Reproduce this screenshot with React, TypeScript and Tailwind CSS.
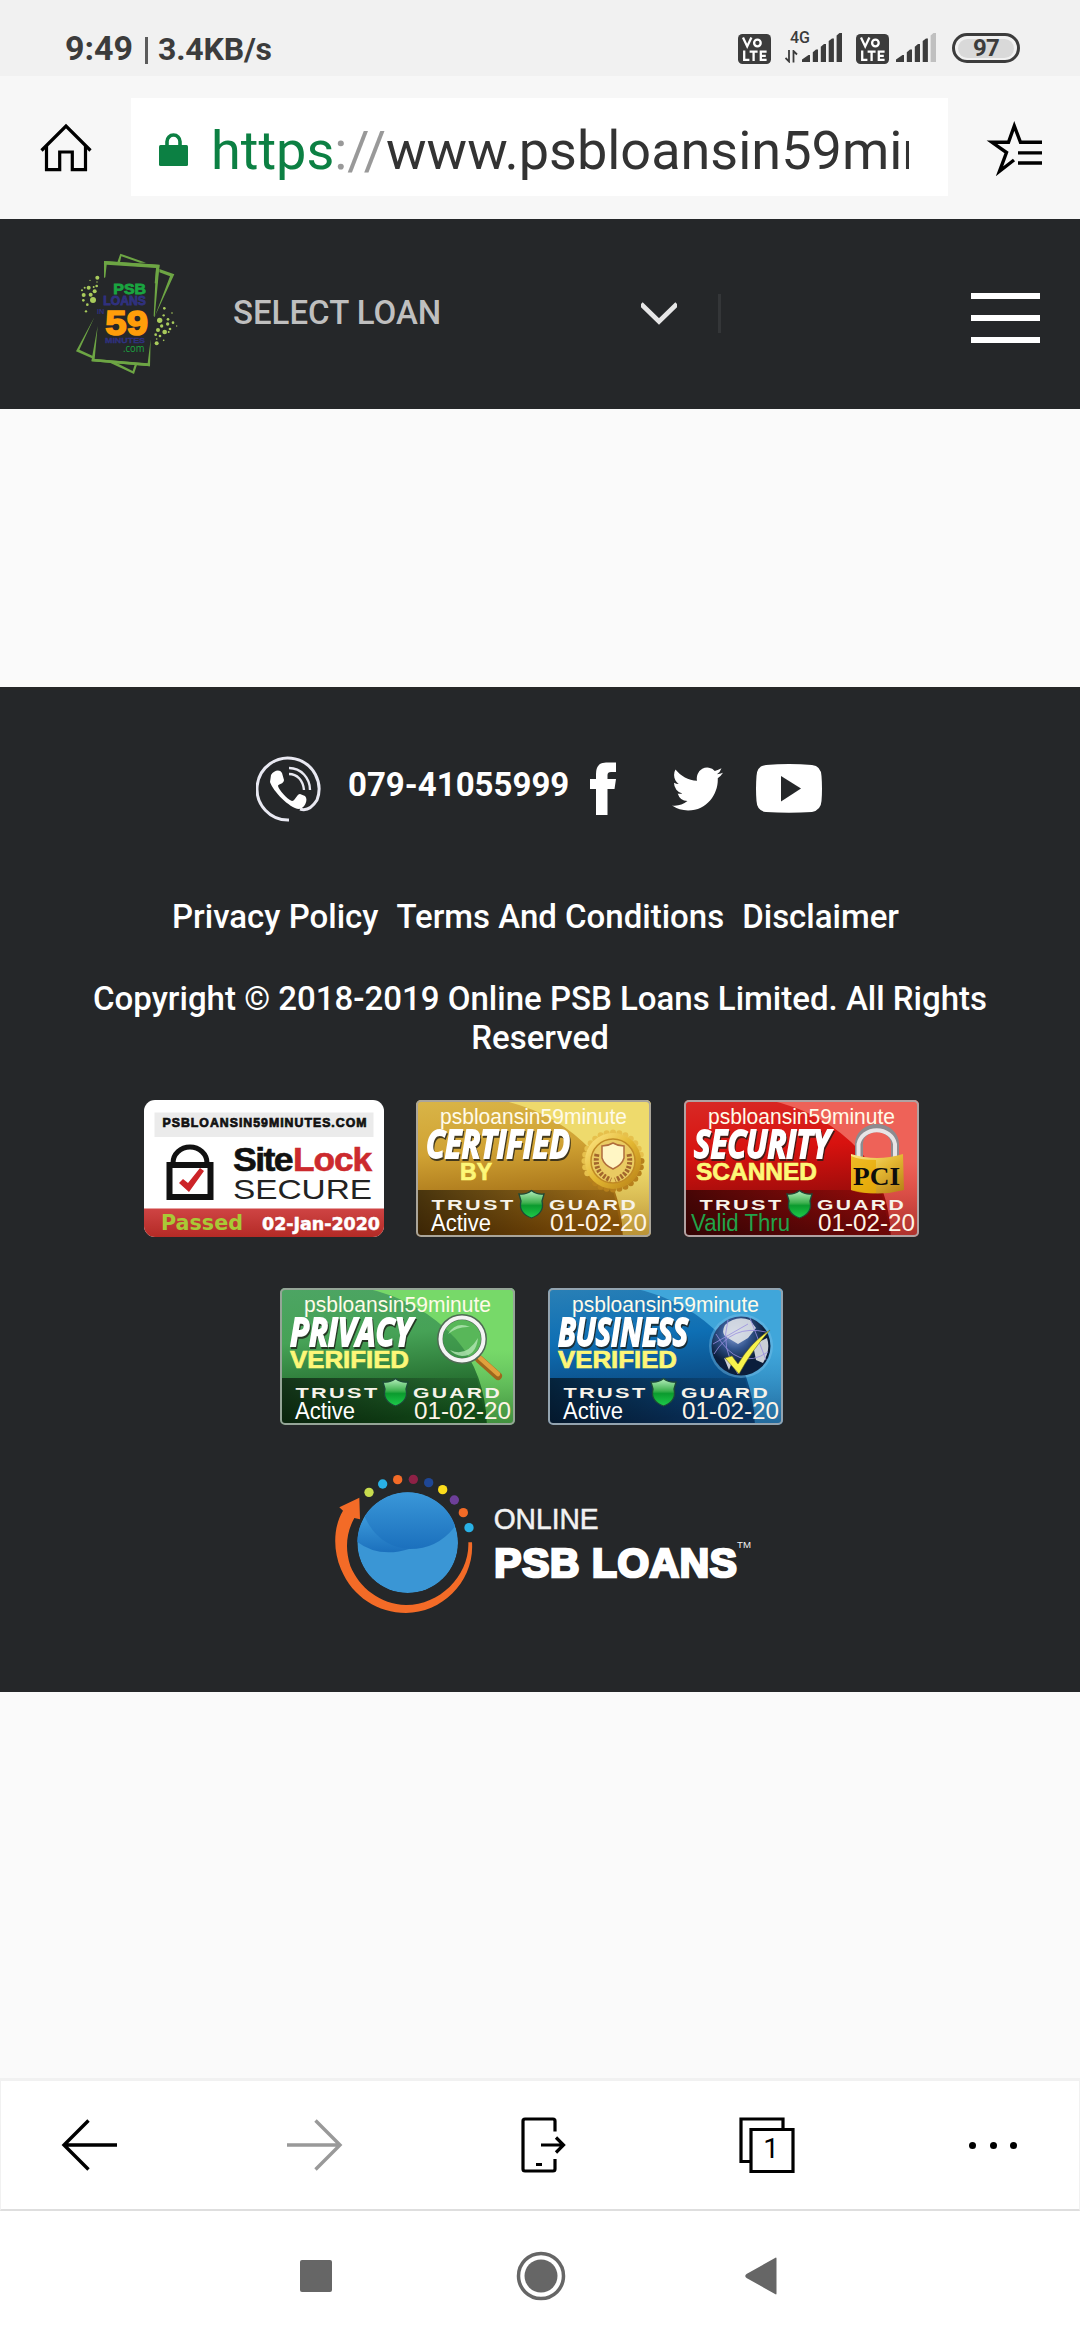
import React from "react";

function VolteIcon() {
  return (
    <svg width="33" height="30" viewBox="0 0 33 30">
      <rect width="33" height="30" rx="4.5" fill="#3c3c3c" />
      <g fill="none" stroke="#fff" strokeWidth="2.3">
        <path d="M5 3.6 9.2 12.4 13.4 3.6" />
        <circle cx="19.4" cy="9" r="3.3" />
        <path d="M6.2 16.5v9.3h5.2M11.6 17.7h8M15.6 17.7v9.2M28.6 17.7h-5.8v8.1h5.8M22.8 21.8h5" />
      </g>
    </svg>
  );
}

function SignalBars({ weak = false }: { weak?: boolean }) {
  return (
    <svg width="40" height="30" viewBox="0 0 40 30" fill="#3c3c3c">
      <path d="M0 29V26.500L6.500 22H8V29ZM10.800 29V19.300L14 16.500H16V29ZM18.800 29V13.800L22 11H24V29ZM26.700 29V8L30 5.500H31.900V29Z" />
      <path d="M34.600 29V2.500L37.500 0H40V29Z" fill={weak ? "#c0c0c0" : "#3c3c3c"} />
    </svg>
  );
}

function StatusBar() {
  return (
    <div className="flex h-[76px] bg-[#f1f1f1] text-[#3c3c3c]">
      <div className="ml-[65px] flex h-[97px] items-center">
        <span className="text-[34px] font-bold">9:49</span>
        <span className="mt-[3px] ml-[12px] h-[27px] w-[3px] bg-[#5c5c5c]" />
        <span className="ml-[10px] text-[32px] font-bold tracking-[-0.2px]">3.4KB/s</span>
      </div>
      <div className="ml-auto flex items-start pr-[60px]">
        <div className="mt-[34px]"><VolteIcon /></div>
        <div className="relative mt-[33px] ml-[14px] flex w-[57px] justify-end">
          <span className="absolute top-[-4px] left-[5px] text-[16px] leading-[18px] font-medium">4G</span>
          <svg className="absolute top-[17px] left-0" width="13" height="13" viewBox="0 0 13 13" fill="none" stroke="#3c3c3c" strokeWidth="1.800">
            <path d="M4 0V11.500L.5 8M8.500 12.500V1L12 4.500" />
          </svg>
          <SignalBars />
        </div>
        <div className="mt-[34px] ml-[14px]"><VolteIcon /></div>
        <div className="mt-[33px] ml-[7px]"><SignalBars weak /></div>
        <div className="mt-[33px] ml-[16px] flex h-[30px] w-[68px] items-center justify-center rounded-full border-[3px] border-[#3c3c3c] bg-[#f1f1f1]">
          <div className="flex h-[19px] w-[56px] items-center justify-center rounded-full bg-[#d9d9d9] text-[24px] leading-none font-bold tracking-[-0.8px]">97</div>
        </div>
      </div>
    </div>
  );
}

function BrowserBar() {
  return (
    <div className="flex h-[143px] bg-[#f7f7f7]">
      <svg className="mt-[47px] ml-[40px]" width="52" height="50" viewBox="0 0 52 50" fill="none" stroke="#000" strokeWidth="3.200">
        <path d="M1.500 27.500 26 3 50.500 27.500" />
        <path d="M6.500 23V46.700H19.700V29H32.300V46.700H45.500V23" />
      </svg>
      <div className="mt-[22px] ml-[39px] flex h-[98px] w-[817px] items-center bg-white">
        <svg className="mt-[3px] ml-[28px]" width="29" height="34" viewBox="0 0 29 34">
          <rect y="13" width="29" height="21" rx="1.500" fill="#0c8043" />
          <path d="M8 14V9.500a6.500 6.500 0 0 1 13 0V14" fill="none" stroke="#0c8043" strokeWidth="3.600" />
        </svg>
        <div className="mt-[7px] ml-[23px] w-[698px] overflow-hidden text-[54px] leading-[70px] whitespace-nowrap text-[#333]">
          <span className="text-[#0c8043]">https</span><span className="text-[#999]">://</span>www.psbloansin59minutes.com
        </div>
      </div>
      <svg className="mt-[43px] ml-[38px]" width="58" height="60" viewBox="0 0 58 60" fill="none" stroke="#000" strokeWidth="3.400">
        <path d="M56 23.300H34.500L28.300 7 22.500 23.300H6L20.500 33.500 13.500 52.300 28 41" />
        <path d="M32 33.900H56M32 44H56" />
      </svg>
    </div>
  );
}

const dots: [number, number, number][] = [
  [112, 113, 6], [90, 121, 2], [74, 143, 3], [86, 143, 6], [101, 141, 3], [110, 138, 4], [111, 126, 2],
  [66, 151, 3], [104, 154, 6], [71, 165, 6], [92, 164, 6], [99, 180, 9], [70, 181, 4], [82, 194, 4], [78, 214, 3.5],
  [313, 205, 4], [336, 219, 2.5], [311, 226, 3.500], [299, 241, 8], [324, 238, 4], [323, 252, 5], [339, 248, 4],
  [305, 258, 5], [350, 258, 2], [294, 270, 6], [314, 276, 7], [330, 267, 4], [287, 284, 4], [300, 288, 4], [326, 276, 3],
  [290, 297, 2.500], [311, 301, 2.500], [290, 310, 6],
];

function PsbLogo() {
  return (
    <svg width="130" height="145" viewBox="0 0 390 435">
      <g fill="#6da544">
        <path d="M132 114V63L299 74 297 92 284 232 281 228 288 84 140 74 136 112Z" />
        <path d="M172 67 181 41 258 68 240 68 184 49 180 67ZM298 87 343 103 284 230 330 109 298 97Z" />
        <path d="M103 232 48 334 96 355 97 347 58 329ZM113 258 94 364 270 379 272 298 263 370 104 357Z" />
        <path d="M140 364 222 402 231 374 224 374 218 393 164 366Z" />
      </g>
      <path d="M132 67 298 79M96 360 270 375M293 78 288 130" fill="none" stroke="#6da544" strokeWidth="8" />
      <g fill="#a9cb5c">{dots.map(([x, y, r], i) => <circle key={i} cx={x} cy={y} r={r} />)}</g>
      <g fontFamily="Liberation Sans" fontWeight="bold" textAnchor="end" strokeWidth="2.500">
        <text x="258" y="162" fontSize="46" textLength="98" lengthAdjust="spacingAndGlyphs" fill="#1aa540" stroke="#1aa540">PSB</text>
        <text x="258" y="194" fontSize="36" textLength="128" lengthAdjust="spacingAndGlyphs" fill="#30317e" stroke="#30317e">LOANS</text>
        <text x="133" y="221" fontSize="20" textLength="22" lengthAdjust="spacingAndGlyphs" fill="#30317e">IN</text>
        <text x="264" y="284" fontSize="107" textLength="128" lengthAdjust="spacingAndGlyphs" fill="#ff9d0a" stroke="#ff9d0a" style={{ strokeWidth: 5 }}>59</text>
        <text x="255" y="309" fontSize="24" textLength="120" lengthAdjust="spacingAndGlyphs" fill="#30317e" stroke="#30317e" style={{ strokeWidth: 1 }}>MINUTES</text>
      </g>
      <text x="253" y="336" textAnchor="end" fontFamily="Open Sans" fontSize="32" textLength="64" lengthAdjust="spacingAndGlyphs" fill="#1aa540">.com</text>
    </svg>
  );
}

function SiteHeader() {
  return (
    <header className="flex h-[190px] items-start bg-[#252729]">
      <div className="mt-[21px] ml-[60px]"><PsbLogo /></div>
      <div className="mt-[75px] ml-[43px] flex w-[488px] items-start">
        <span className="mt-[-1px] text-[33px] leading-[39px] font-medium text-[#bfbfbf]">SELECT LOAN</span>
        <svg className="mt-[6px] ml-auto mr-[41px]" width="36" height="28" viewBox="0 0 36 28" fill="none" stroke="#e6e6e6" strokeWidth="4.800">
          <path d="M0 4 18 21.500 36 4" />
        </svg>
        <span className="h-[39px] w-[3px] bg-[#343638]" />
      </div>
      <div className="mt-[74px] mr-[40px] ml-auto flex w-[69px] flex-col gap-4">
        <span className="h-[6px] bg-white" />
        <span className="h-[6px] bg-white" />
        <span className="h-[6px] bg-white" />
      </div>
    </header>
  );
}

function ContactRow() {
  return (
    <div className="flex h-[66px] items-start pl-[256px] text-white">
      <svg width="66" height="66" viewBox="0 0 66 66" fill="none" stroke="#e9e9f2">
        <path d="M33 64A31 31 0 1 1 61 44C56 52 50 55 44 53" strokeWidth="3" />
        <path d="M15 19C18 14 24 13 26 17L28 24C28 28 22 28 22 30C23 34 31 43 36 45C39 45 41 38 44 38L49 40C53 44 48 53 43 53C33 52 17 35 14 26Z" fill="#fff" stroke="none" />
        <path d="M33 18C41 18 47 24 48 34M33 12C45 12 54 22 54 34" strokeWidth="2.400" />
      </svg>
      <span className="mt-[9px] ml-[26px] w-[221px] text-[33px] leading-[39px] font-bold whitespace-nowrap">079-41055999</span>
      <svg className="mt-[5px] ml-[21px]" width="26" height="54" viewBox="0 0 26 54" fill="#fff">
        <path d="M6 54V28H0V18H6V13Q6 1.500 16 1.500H26V11H21Q17.500 11 17.500 14V18H26L24.500 28H17.500V54Z" />
      </svg>
      <svg className="mt-[11px] ml-[56px]" width="51" height="44" viewBox="0 2 24 20" preserveAspectRatio="none" fill="#fff">
        <path d="M23.950 4.570a10 10 0 0 1-2.820.77 4.960 4.960 0 0 0 2.160-2.720 9.900 9.900 0 0 1-3.130 1.180 4.920 4.920 0 0 0-8.380 4.490C7.690 8.100 4.070 6.130 1.640 3.160a4.820 4.820 0 0 0-.66 2.480c0 1.710.87 3.210 2.180 4.100a4.900 4.900 0 0 1-2.230-.62v.06a4.920 4.920 0 0 0 3.950 4.830 5 5 0 0 1-2.210.08 4.940 4.940 0 0 0 4.600 3.420A9.870 9.870 0 0 1 0 19.540a14 14 0 0 0 7.550 2.210c9.050 0 14-7.500 14-13.980 0-.21 0-.42-.02-.63a9.940 9.940 0 0 0 2.460-2.550z" />
      </svg>
      <svg className="mt-[8px] ml-[33px]" width="66" height="49" viewBox="0 0 66 49">
        <path d="M10 1Q33-1 56 1Q65 2 65.500 12Q66.500 25 65.500 37Q65 46 56 48Q33 49.500 10 48Q1 47 .5 37Q-.5 25 .5 12Q1 2 10 1Z" fill="#fff" />
        <path d="M25 12 45 24.500 25 37.500Z" fill="#252729" />
      </svg>
    </div>
  );
}

function SiteLockBadge() {
  return (
    <svg width="240" height="137" viewBox="0 0 240 137" fontFamily="Liberation Sans">
      <defs>
        <linearGradient id="lockBand" x2="0" y2="1"><stop stopColor="#cf4444" /><stop offset="1" stopColor="#b32a25" /></linearGradient>
        <clipPath id="lockClip"><rect width="240" height="137" rx="11" /></clipPath>
      </defs>
      <g clipPath="url(#lockClip)">
        <rect width="240" height="137" fill="#fff" />
        <rect x="10.500" y="12.500" width="219" height="24.500" fill="#ebebeb" />
        <rect y="108.500" width="240" height="29" fill="url(#lockBand)" />
      </g>
      <text x="18.500" y="27" fontSize="12" fontWeight="bold" letterSpacing="1" textLength="205" lengthAdjust="spacingAndGlyphs" fill="#111" stroke="#111" strokeWidth=".7">PSBLOANSIN59MINUTES.COM</text>
      <rect x="25.500" y="65" width="41" height="32" fill="none" stroke="#111" strokeWidth="6" />
      <path d="M29 63A17 16 0 0 1 63 63" fill="none" stroke="#111" strokeWidth="5" />
      <path d="M35 83 39 79 44 83 56 68 60 71 45 92Z" fill="#cc2428" />
      <text x="89" y="70.500" fontSize="33" fontWeight="bold" letterSpacing="-1.500" textLength="59" lengthAdjust="spacingAndGlyphs" fill="#111" stroke="#111" strokeWidth=".6">Site</text>
      <text x="149" y="70.500" fontSize="33" fontWeight="bold" letterSpacing="-1" textLength="78" lengthAdjust="spacingAndGlyphs" fill="#cc2a2e" stroke="#cc2a2e" strokeWidth=".6">Lock</text>
      <text x="89" y="98.500" fontSize="28" textLength="139" lengthAdjust="spacingAndGlyphs" fill="#222">SECURE</text>
      <text x="17" y="130" fontSize="21" fontFamily="DejaVu Sans" fontWeight="bold" textLength="82" lengthAdjust="spacingAndGlyphs" fill="#a9c936">Passed</text>
      <text x="118" y="130" fontSize="17.500" fontFamily="DejaVu Sans" fontWeight="bold" textLength="118" lengthAdjust="spacingAndGlyphs" fill="#fff" stroke="#fff" strokeWidth=".5">02-Jan-2020</text>
    </svg>
  );
}

type Trust = {
  id: string;
  title: string;
  titleWidth: number;
  sub: string;
  subX: number;
  subWidth: number;
  status: string;
  colors: { light: string; from: string; to: string; border: string; glow: string };
  art: React.ReactNode;
};

const teeth = Array.from({ length: 28 }, (_, i) => {
  const a = (i / 28) * Math.PI * 2;
  return [197 + Math.cos(a) * 28.5, 61 + Math.sin(a) * 28.5];
});

const medal = (
  <g>
    {teeth.map(([x, y], i) => <circle key={i} cx={x} cy={y} r="3" fill={i < 12 ? "#b7801c" : "#e6c04c"} />)}
    <circle cx="197" cy="61" r="28" fill="url(#goldRing)" />
    <circle cx="197" cy="61" r="22" fill="#eacb62" stroke="#c18a25" strokeWidth="1.500" />
    <path d="M181 54Q177 73 195 80M213 54Q217 73 199 80" fill="none" stroke="#a3662c" strokeWidth="5" strokeDasharray="2.500 1.500" />
    <path d="M186 46Q192 46 197 43Q202 46 208 46V58Q206 65 197 69Q188 65 186 58Z" fill="#fff6c4" stroke="#b06c3c" strokeWidth="1.500" />
  </g>
);

const padlock = (
  <g>
    <path d="M175 60V44A18 16 0 0 1 211 44V60" fill="none" stroke="#8d8b8f" strokeWidth="8" />
    <path d="M174.500 60V44A18.500 16.500 0 0 1 211 44V60" fill="none" stroke="#e8e5e6" strokeWidth="4" />
    <path d="M167 54Q193 62 219 54L220 90Q194 97 167 90Z" fill="url(#goldRing)" />
    <path d="M167 56Q175 60 192 60V93Q178 94 167 90Z" fill="#e9a900" opacity=".7" />
    <text x="169" y="85" fontFamily="Liberation Serif" fontWeight="bold" fontSize="26" textLength="47" lengthAdjust="spacingAndGlyphs" fill="#0d0d0d">PCI</text>
  </g>
);

const magnifier = (
  <g>
    <path d="M199 71 218 88" stroke="#a0661c" strokeWidth="8" strokeLinecap="round" />
    <path d="M200 70 218 86" stroke="#e0a13c" strokeWidth="4.500" strokeLinecap="round" />
    <circle cx="182" cy="51" r="22" fill="#3f9a4c" fillOpacity=".55" stroke="#4f6b54" strokeWidth="6" />
    <circle cx="182" cy="51" r="21.500" fill="none" stroke="#f4f4f4" strokeWidth="4" />
    <path d="M168 46Q176 33 190 39Q178 38 168 46ZM170 62Q186 70 198 50Q196 68 182 68Q174 67 170 62Z" fill="#b4e6b4" opacity=".8" />
  </g>
);

const globe = (
  <g>
    <circle cx="193" cy="58" r="32" fill="#7fc4ea" opacity=".4" />
    <circle cx="193" cy="58" r="29.500" fill="url(#globeFill)" />
    <path d="M177 37Q188 27 202 32L208 40 200 50 190 56 180 50Q172 46 177 37ZM205 57 219 50Q223 62 215 75L208 72ZM176 70 184 74 181 82Z" fill="#dfe2e8" opacity=".9" />
    <path d="M166 66Q184 36 218 44M168 46Q190 84 220 64M180 32Q172 60 190 86M202 30 218 72M165 56 200 36" fill="none" stroke="#9a8fe0" strokeWidth="1" opacity=".8" />
    <path d="M177 70 184 68 190 76Q203 54 222 42Q204 62 191 86Z" fill="#f8f34c" stroke="#6e6b22" strokeWidth=".6" />
  </g>
);

const certified: Trust = { id: "cert", title: "CERTIFIED", titleWidth: 144, sub: "BY", subX: 44, subWidth: 32, status: "Active", art: medal, colors: { light: "#eeda6c", from: "#d0a233", to: "#8e5608", border: "#aaa59a", glow: "#d9b548" } };
const security: Trust = { id: "sec", title: "SECURITY", titleWidth: 136, sub: "SCANNED", subX: 12, subWidth: 121, status: "Valid Thru", art: padlock, colors: { light: "#ee6258", from: "#d8120f", to: "#780808", border: "#b0a2a2", glow: "#d82a26" } };
const privacy: Trust = { id: "priv", title: "PRIVACY", titleWidth: 122, sub: "VERIFIED", subX: 10, subWidth: 119, status: "Active", art: magnifier, colors: { light: "#77d969", from: "#46a256", to: "#14531b", border: "#95a597", glow: "#4da564" } };
const business: Trust = { id: "biz", title: "BUSINESS", titleWidth: 130, sub: "VERIFIED", subX: 10, subWidth: 119, status: "Active", art: globe, colors: { light: "#40a6da", from: "#0e6fb4", to: "#0a3768", border: "#93a3af", glow: "#2a80b6" } };

function TrustBadge({ b }: { b: Trust }) {
  const c = b.colors;
  const valid = b.status === "Valid Thru";
  return (
    <svg width="235" height="137" viewBox="0 0 235 137" fontFamily="Liberation Sans">
      <defs>
        <linearGradient id={`${b.id}Base`} x1="0" y1="0" x2=".15" y2="1"><stop stopColor={c.glow} /><stop offset=".4" stopColor={c.from} /><stop offset="1" stopColor={c.to} /></linearGradient>
        <linearGradient id={`${b.id}Light`} x2="0" y2="1"><stop offset=".45" stopColor={c.light} /><stop offset="1" stopColor={c.light} stopOpacity=".45" /></linearGradient>
        <linearGradient id={`${b.id}Band`}><stop stopColor="#000" stopOpacity=".6" /><stop offset=".9" stopColor="#000" stopOpacity=".1" /></linearGradient>
        <linearGradient id={`${b.id}Shield`} x2="0" y2="1"><stop stopColor="#b6efbd" /><stop offset=".45" stopColor="#3eb14f" /><stop offset=".55" stopColor="#0b9b2e" /><stop offset="1" stopColor="#1ecc4b" /></linearGradient>
        <linearGradient id="goldRing" x2="1" y2="1"><stop stopColor="#ffe98a" /><stop offset=".5" stopColor="#e3b732" /><stop offset="1" stopColor="#b47c14" /></linearGradient>
        <radialGradient id="globeFill" cx=".4" cy=".3"><stop stopColor="#8da3d8" /><stop offset=".5" stopColor="#34568f" /><stop offset="1" stopColor="#0b1e3c" /></radialGradient>
        <clipPath id={`${b.id}Clip`}><rect width="235" height="137" rx="5" /></clipPath>
      </defs>
      <g clipPath={`url(#${b.id}Clip)`}>
        <rect width="235" height="137" fill={`url(#${b.id}Base)`} />
        <path d="M85 0Q140 12 176 51Q205 85 207 137H235V0Z" fill={`url(#${b.id}Light)`} />
        <path d="M0 90H197L207 137H0Z" fill={`url(#${b.id}Band)`} />
      </g>
      <rect x="1" y="1" width="233" height="135" rx="4" fill="none" stroke={c.border} strokeWidth="2" />
      {b.art}
      <text x="24" y="23.500" fontSize="21.500" textLength="187" lengthAdjust="spacingAndGlyphs" fill="#fffbe9">psbloansin59minute</text>
      <text className="drop-shadow-[1.5px_2px_0.5px_rgba(30,30,24,0.8)]" x="10" y="58" textLength={b.titleWidth} lengthAdjust="spacingAndGlyphs" fontFamily="Open Sans" fontWeight="bold" fontStyle="italic" fontSize="39" fill="#fff" stroke="#fff" strokeWidth="1.800">{b.title}</text>
      <text x={b.subX} y="80" fontSize="23.500" fontWeight="bold" textLength={b.subWidth} lengthAdjust="spacingAndGlyphs" fill="#fdf778" stroke="#fdf778" strokeWidth=".7">{b.sub}</text>
      <g fontFamily="Liberation Sans" fontWeight="bold" fontSize="14" letterSpacing="1.500" fill="#f7f3ea">
        <text x="15.500" y="110" textLength="84" lengthAdjust="spacingAndGlyphs">TRUST</text>
        <text x="133" y="110" textLength="89" lengthAdjust="spacingAndGlyphs">GUARD</text>
      </g>
      <path d="M103 94Q110 95 115.500 90.500Q121 95 128 94L126 101Q129 113 115.500 118Q102 113 105 101Z" fill={`url(#${b.id}Shield)`} stroke="#1d4a37" strokeWidth="1.300" />
      <text x={valid ? 7 : 15} y="131" fontSize="23" textLength={valid ? 99 : 60} lengthAdjust="spacingAndGlyphs" fill={valid ? "#22a34a" : "#fff"}>{b.status}</text>
      <text x="134" y="131" fontSize="23" textLength="97" lengthAdjust="spacingAndGlyphs" fill="#fff4e6">01-02-20</text>
    </svg>
  );
}

const ring: [number, number, string][] = [
  [147, 97, "#c8dc4e"], [188, 72, "#29b1e6"], [233, 59, "#f36b27"], [280, 58, "#8e2146"], [326, 68, "#1f4795"],
  [368, 89, "#fbdc1c"], [403, 120, "#6d3f9a"], [430, 158, "#f36b27"], [447, 203, "#29b1e6"],
];

function OnlineLogo() {
  return (
    <svg width="450" height="170" viewBox="0 0 1350 510" fontFamily="Liberation Sans">
      <defs>
        <linearGradient id="waveA" x2="0" y2="1"><stop stopColor="#3d9bdb" /><stop offset="1" stopColor="#1b70bd" /></linearGradient>
        <clipPath id="globeClip"><circle cx="263" cy="248" r="151" /></clipPath>
      </defs>
      <g clipPath="url(#globeClip)">
        <circle cx="263" cy="248" r="151" fill="#3a96d5" />
        <path d="M100 236Q170 298 270 266L135 165Z" fill="url(#waveA)" />
        <path d="M133 168Q175 262 270 267Q350 267 402 203L440 80H100Z" fill="url(#waveA)" />
      </g>
      {ring.map(([x, y, c]) => <circle key={x} cx={x} cy={y} r="14" fill={c} />)}
      <path d="M118 113 58 142 69 152C40 200 38 270 63 328C98 412 175 459 258 459C368 459 464 362 456 247H445C449 347 358 436 258 435C180 433 118 383 91 318C74 265 79 218 103 174L120 178Z" fill="#f36b27" />
      <text x="521" y="206" fontSize="86" textLength="315" lengthAdjust="spacingAndGlyphs" fill="#f2f2f2" stroke="#f2f2f2" strokeWidth="1.500">ONLINE</text>
      <text x="523" y="351" fontSize="120" fontWeight="bold" letterSpacing="2" textLength="730" lengthAdjust="spacingAndGlyphs" fill="#fff" stroke="#fff" strokeWidth="8">PSB LOANS</text>
      <text x="1251" y="263" fontSize="29" textLength="42" lengthAdjust="spacingAndGlyphs" fill="#f2f2f2">TM</text>
    </svg>
  );
}

function SiteFooter() {
  return (
    <footer className="h-[1005px] bg-[#252729] pt-[69px] text-[33px] font-medium text-white">
      <ContactRow />
      <nav className="mt-[76px] ml-[172px] flex gap-[18px] leading-[38px] whitespace-nowrap">
        <a>Privacy Policy</a>
        <a>Terms And Conditions</a>
        <a>Disclaimer</a>
      </nav>
      <p className="mt-[43px] px-[80px] text-center leading-[39px]">
        Copyright © 2018-2019 Online PSB Loans Limited. All Rights Reserved
      </p>
      <div className="mt-[43px] ml-[144px] flex">
        <SiteLockBadge />
        <div className="ml-[32px]"><TrustBadge b={certified} /></div>
        <div className="ml-[33px]"><TrustBadge b={security} /></div>
      </div>
      <div className="mt-[51px] ml-[280px] flex gap-[33px]">
        <TrustBadge b={privacy} />
        <TrustBadge b={business} />
      </div>
      <div className="mt-[35px] ml-[320px]"><OnlineLogo /></div>
    </footer>
  );
}

function Toolbar() {
  return (
    <div className="flex h-[133px] items-center border-x border-t-[3px] border-b-2 border-x-[#f1f1f1] border-t-[#f1f1f1] border-b-[#dedede] bg-white pl-[60px]">
      <svg width="58" height="54" viewBox="0 0 58 54" fill="none" stroke="#000" strokeWidth="3.400">
        <path d="M56 27H3M27.500 2.500 3 27 27.500 51.500" />
      </svg>
      <svg className="ml-[167px]" width="58" height="54" viewBox="0 0 58 54" fill="none" stroke="#999" strokeWidth="3.400">
        <path d="M1 27H54M29.500 2.500 54 27 29.500 51.500" />
      </svg>
      <svg className="ml-[177px]" width="46" height="58" viewBox="0 0 46 58" fill="none" stroke="#000" strokeWidth="3.200">
        <path d="M34 15.500V5Q34 3 32 3H4Q2 3 2 5V53Q2 55 4 55H32Q34 55 34 53V43" />
        <path d="M20 29H43M35 21.500 42.500 29 35 36.500M15 48.500H21" />
      </svg>
      <div className="relative ml-[172px] h-[58px] w-[56px]">
        <svg width="56" height="58" viewBox="0 0 56 58" fill="none" stroke="#000" strokeWidth="3.200">
          <path d="M11 45.500H2V3H44V12M12 13.500H54V55.500H12Z" />
        </svg>
        <span className="absolute top-[18px] left-[11px] w-[42px] text-center text-[28px] leading-[30px]">1</span>
      </div>
      <div className="ml-[174px] flex gap-[13.5px]">
        <span className="size-[7px] rounded-full bg-black" />
        <span className="size-[7px] rounded-full bg-black" />
        <span className="size-[7px] rounded-full bg-black" />
      </div>
    </div>
  );
}

function SystemNav() {
  return (
    <div className="flex h-[129px] items-center bg-white pl-[300px]">
      <span className="h-[32px] w-[32px] rounded-[2px] bg-[#666]" />
      <svg className="ml-[184px]" width="50" height="50" viewBox="0 0 50 50">
        <circle cx="25" cy="25" r="22.500" fill="none" stroke="#666" strokeWidth="3.500" />
        <circle cx="25" cy="25" r="16.500" fill="#666" />
      </svg>
      <svg className="ml-[179px]" width="32" height="38" viewBox="0 0 32 38" fill="#666">
        <path d="M31.500 1.500V36.500Q31.500 38 30 37L1.500 21Q-1 19 1.500 17L30 1Q31.500 0 31.500 1.500Z" />
      </svg>
    </div>
  );
}

export default function App() {
  return (
    <div className="flex h-[2340px] w-[1080px] flex-col overflow-hidden bg-[#fafafa] font-['Roboto',sans-serif]">
      <StatusBar />
      <BrowserBar />
      <SiteHeader />
      <main className="h-[278px]" />
      <SiteFooter />
      <div className="flex-1" />
      <Toolbar />
      <SystemNav />
    </div>
  );
}
